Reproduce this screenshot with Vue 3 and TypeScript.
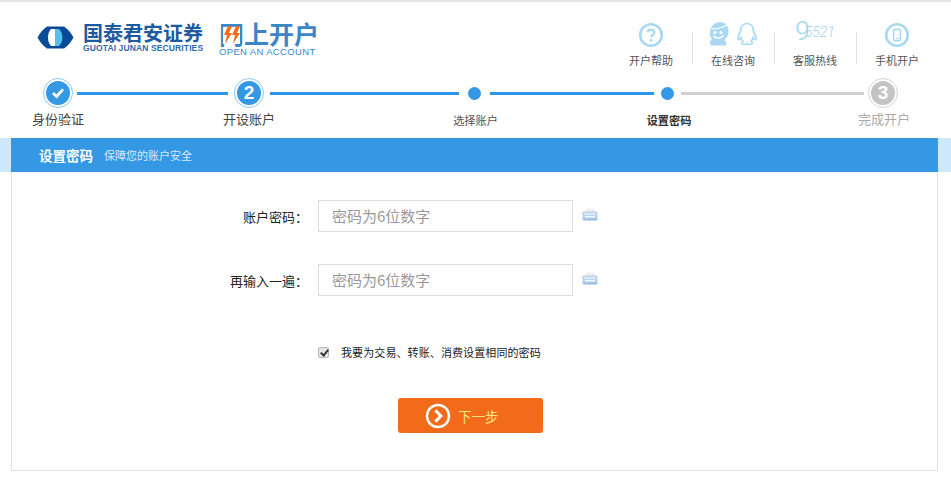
<script setup lang="ts">
import { ref } from "vue";

interface Step {
  label: string;
  kind: "done" | "num" | "dot" | "todo";
  num?: string;
  bold?: boolean;
  width: number;
  // length of the line after this step
  line?: number;
  lineOn?: boolean;
}

const steps: Step[] = [
  { label: "身份验证", kind: "done", width: 38, line: 151, lineOn: true },
  { label: "开设账户", kind: "num", num: "2", width: 42, line: 189, lineOn: true },
  { label: "选择账户", kind: "dot", width: 31, line: 164, lineOn: true },
  { label: "设置密码", kind: "dot", bold: true, width: 27, line: 183, lineOn: false },
  { label: "完成开户", kind: "todo", num: "3", width: 38 },
];

const samePassword = ref(true);
</script>

<template>
  <div class="page">
    <header class="top">
      <div class="brand">
        <svg class="brand-mark" width="37" height="23" viewBox="0 0 37 23">
          <path d="M10 0.5H27C31 3 34 7 36.5 11.5C34 16 31 20 27 22.5H10C6 20 3 16 0.5 11.5C3 7 6 3 10 0.5Z" fill="#0b4a96" />
          <path d="M18 3H14C10 7 10 16 14 20H18Z" fill="#fff" />
          <path d="M18 3H22C26.5 7 26.5 16 22 20H18Z" fill="#55bdf0" />
        </svg>
        <div class="brand-name">
          <div class="brand-cn">国泰君安证券</div>
          <div class="brand-en">GUOTAI JUNAN SECURITIES</div>
        </div>
        <div class="open">
          <div class="open-cn">
            <span class="open-first">网<svg class="bolt" width="19" height="20" viewBox="0 0 19 20">
                <rect x="1" y="2" width="17" height="17" fill="#fff" />
                <path d="M6 1H10L7 8H10L3 19L5 10H2Z" fill="#f26b1a" />
                <path d="M14 1H18L15 8H18L11 19L13 10H10Z" fill="#f26b1a" />
              </svg></span>上开户
          </div>
          <div class="open-en">OPEN AN ACCOUNT</div>
        </div>
      </div>
      <nav class="nav">
        <div class="nav-item">
          <svg width="26" height="26" viewBox="0 0 26 26" fill="none" stroke="#a9d9f2">
            <circle cx="13" cy="13" r="10.8" stroke-width="2.6" />
            <path d="M9.6 10.4C9.8 6.8 16.4 6.8 16.4 10.6C16.4 13 13 13 13 15.4" stroke-width="2.2" />
            <circle cx="13" cy="18.4" r="1.3" fill="#a9d9f2" stroke="none" />
          </svg>
          <span>开户帮助</span>
        </div>
        <div class="nav-item">
          <div class="nav-pair">
            <svg width="21" height="24" viewBox="0 0 21 24">
              <path d="M2 9C3 3 8 0 12 0C18 0 21 5 20.5 10C20.5 14 18 16.5 16 18C18 19 19 21 18 23.5H3C1 21 1.5 19 4 17.5C2 15 1.5 12 2 9Z" fill="#a9d9f2" />
              <path d="M3 7C8 7 14 6 19 3" stroke="#fff" stroke-width="1.2" fill="none" />
              <circle cx="7" cy="10.5" r="1.6" fill="#fff" />
              <circle cx="13" cy="10.5" r="1.6" fill="#fff" />
              <path d="M5.5 14C8 17 13 17 15.5 13.5" stroke="#fff" stroke-width="1.4" fill="none" />
            </svg>
            <svg width="22" height="24" viewBox="0 0 22 24" fill="none" stroke="#a9d9f2" stroke-width="1.6">
              <path d="M11 1.5C6.5 1.5 4.5 5 4.5 9.5C3 12 1.5 15 2.2 17.6C3 18 4 17 5 15.5C5.4 17.5 6 18.6 7 19.4C5 20.4 5 22.4 8 22.5C9.4 22.5 10 22 11 21.6C12 22 12.6 22.5 14 22.5C17 22.4 17 20.4 15 19.4C16 18.6 16.6 17.5 17 15.5C18 17 19 18 19.8 17.6C20.5 15 19 12 17.5 9.5C17.5 5 15.5 1.5 11 1.5Z" />
            </svg>
          </div>
          <span>在线咨询</span>
        </div>
        <div class="nav-item">
          <div class="hotline"><b>9</b><i>5521</i></div>
          <span>客服热线</span>
        </div>
        <div class="nav-item">
          <svg width="26" height="26" viewBox="0 0 26 26" fill="none" stroke="#a9d9f2">
            <circle cx="13" cy="13" r="10.8" stroke-width="2.6" />
            <rect x="9.6" y="7.4" width="6.8" height="11.2" rx="1.4" stroke-width="1.6" />
            <path d="M12 16.4H14" stroke-width="1.2" />
          </svg>
          <span>手机开户</span>
        </div>
      </nav>
    </header>

    <section class="steps">
      <template v-for="step in steps" :key="step.label">
        <div class="step" :style="{ width: step.width + 'px' }">
          <div class="step-mark">
            <span v-if="step.kind === 'dot'" class="dot"></span>
            <span v-else class="ring" :class="{ grey: step.kind === 'todo' }">
              <span class="disc">
                <svg v-if="step.kind === 'done'" width="14" height="12" viewBox="0 0 14 12" fill="none">
                  <path d="M2 6L5.6 9.4L12 2.4" stroke="#fff" stroke-width="2.8" />
                </svg>
                <template v-else>{{ step.num }}</template>
              </span>
            </span>
          </div>
          <div
            class="step-label"
            :class="{ small: step.kind === 'dot', strong: step.bold, off: step.kind === 'todo' }"
          >
            {{ step.label }}
          </div>
        </div>
        <div
          v-if="step.line"
          class="step-line"
          :class="{ on: step.lineOn }"
          :style="{ width: step.line + 'px' }"
        ></div>
      </template>
    </section>

    <div class="band-wrap">
      <div class="band">
        <span class="band-title">设置密码</span>
        <span class="band-sub">保障您的账户安全</span>
      </div>
    </div>

    <main class="panel">
      <div class="row">
        <label class="row-label">账户密码：</label>
        <input class="field" type="password" placeholder="密码为6位数字" />
        <svg class="kbd" width="16" height="13" viewBox="0 0 16 13">
          <path d="M2.5 3.5L4 0.5H12L13.5 3.5Z" fill="#efefef" />
          <rect x="0.5" y="3.5" width="15" height="9" rx="1" fill="#b7d0ec" />
          <path d="M2 6H14" stroke="#eef5fb" stroke-width="1.2" />
          <path d="M3 8.6H13" stroke="#f6f9fc" stroke-width="1.4" />
          <path d="M1 11.6H15" stroke="#8fb3d9" stroke-width="1" />
        </svg>
      </div>
      <div class="row">
        <label class="row-label">再输入一遍：</label>
        <input class="field" type="password" placeholder="密码为6位数字" />
        <svg class="kbd" width="16" height="13" viewBox="0 0 16 13">
          <path d="M2.5 3.5L4 0.5H12L13.5 3.5Z" fill="#efefef" />
          <rect x="0.5" y="3.5" width="15" height="9" rx="1" fill="#b7d0ec" />
          <path d="M2 6H14" stroke="#eef5fb" stroke-width="1.2" />
          <path d="M3 8.6H13" stroke="#f6f9fc" stroke-width="1.4" />
          <path d="M1 11.6H15" stroke="#8fb3d9" stroke-width="1" />
        </svg>
      </div>
      <label class="same">
        <input v-model="samePassword" type="checkbox" />
        <span>我要为交易、转账、消费设置相同的密码</span>
      </label>
      <button class="next" type="button">
        <svg width="26" height="26" viewBox="0 0 26 26" fill="none" stroke="#fff">
          <circle cx="13" cy="13" r="11" stroke-width="2.4" />
          <path d="M10.4 7.4L15.8 13L10.4 18.6" stroke-width="3" />
        </svg>
        <span>下一步</span>
      </button>
    </main>
  </div>
</template>

<style scoped>
.page {
  width: 951px;
  height: 479px;
  overflow: hidden;
  display: flex;
  flex-direction: column;
  background: #fff;
  font-family: "Noto Sans CJK SC", "Liberation Sans", sans-serif;
  color: #333;
}

/* Header */
.top {
  height: 58px;
  flex: none;
  border-top: 2px solid #e8e8e8;
  padding: 18px 13px 0 37px;
  display: flex;
  justify-content: space-between;
  align-items: flex-start;
}

.brand {
  display: flex;
  align-items: flex-start;
}

.brand-mark {
  margin-top: 6px;
}

.brand-name {
  margin-left: 9px;
  margin-top: 4px;
  width: 121px;
}

.brand-cn {
  font-size: 20px;
  line-height: 18px;
  font-weight: 700;
  color: #1d5a9e;
  white-space: nowrap;
}

.brand-en {
  font-family: "Liberation Sans", sans-serif;
  font-size: 8.5px;
  line-height: 8px;
  margin-top: 2px;
  letter-spacing: 0.12px;
  font-weight: 700;
  color: #2f6cab;
  white-space: nowrap;
}

.open {
  margin-left: 15px;
  margin-top: 1px;
}

.open-cn {
  font-size: 25px;
  line-height: 25px;
  font-weight: 700;
  color: #3a86c8;
  white-space: nowrap;
}

.open-first {
  position: relative;
  display: inline-block;
}

.bolt {
  position: absolute;
  left: 3px;
  top: 4px;
}

.open-en {
  font-family: "Liberation Sans", sans-serif;
  font-size: 9.5px;
  line-height: 9px;
  margin-top: 1px;
  letter-spacing: 0.35px;
  color: #3a86c8;
  white-space: nowrap;
}

.nav {
  display: flex;
  margin-top: 2px;
}

.nav-item {
  width: 82px;
  height: 44px;
  display: flex;
  flex-direction: column;
  align-items: center;
  font-size: 11px;
  color: #555;
  position: relative;
}

.nav-item > svg,
.nav-pair,
.hotline {
  height: 26px;
  flex: none;
}

.nav-item > span {
  margin-top: 4px;
  line-height: 16px;
  white-space: nowrap;
}

.nav-item + .nav-item::before {
  content: "";
  position: absolute;
  left: 0;
  top: 10px;
  height: 32px;
  border-left: 1px solid #e2e2e2;
}

.nav-pair {
  display: flex;
  gap: 7px;
}

.hotline {
  display: flex;
  align-items: flex-start;
  font-family: Roboto, "Liberation Sans", sans-serif;
  color: #a0d4f0;
  line-height: 1;
}

.hotline b {
  font-size: 26px;
  font-weight: 300;
  margin-top: -4px;
}

.hotline i {
  font-size: 14px;
  font-weight: 300;
  margin-left: -5px;
  margin-top: 3px;
}

/* Steps */
.steps {
  height: 60px;
  flex: none;
  padding-left: 39px;
  display: flex;
  align-items: flex-start;
}

.step {
  flex: none;
  display: flex;
  flex-direction: column;
  align-items: center;
}

.step-mark {
  height: 30px;
  display: flex;
  align-items: center;
  justify-content: center;
}

.ring {
  width: 30px;
  height: 30px;
  box-sizing: border-box;
  border: 1px solid #8ec8f0;
  border-radius: 50%;
  display: flex;
  align-items: center;
  justify-content: center;
  flex: none;
}

.disc {
  width: 24px;
  height: 24px;
  border-radius: 50%;
  background: #3498e5;
  color: #fff;
  display: flex;
  align-items: center;
  justify-content: center;
  font-family: "Liberation Sans", sans-serif;
  font-size: 19px;
  font-weight: 700;
}

.ring.grey {
  border-color: #d4d4d4;
}

.ring.grey .disc {
  background: #c4c4c4;
}

.dot {
  width: 13px;
  height: 13px;
  border-radius: 50%;
  background: #3498e5;
}

.step-label {
  margin-top: 3px;
  font-size: 13px;
  line-height: 16px;
  color: #444;
  white-space: nowrap;
}

.step-label.small {
  font-size: 11.2px;
  color: #555;
  margin-top: 4px;
  margin-left: 2px;
}

.step-label.strong {
  font-weight: 700;
  color: #333;
  margin-left: 3px;
}

.step-label.off {
  color: #aaa;
  margin-left: 2px;
}

.step-line {
  flex: none;
  height: 3px;
  margin-top: 14px;
  background: #d0d0d0;
}

.step-line.on {
  background: #2e96e8;
}

/* Band */
.band-wrap {
  flex: none;
  padding: 0 13px 0 11px;
  background: #cde8fa;
}

.band {
  height: 34px;
  background: #3498e5;
  padding-left: 28px;
  display: flex;
  align-items: center;
  color: #fff;
}

.band-title {
  font-size: 13.5px;
  font-weight: 700;
}

.band-sub {
  margin-left: 11px;
  font-size: 11px;
  color: #d8ecfb;
}

/* Form panel */
.panel {
  flex: none;
  height: 299px;
  box-sizing: border-box;
  margin: 0 13px 0 11px;
  border: 1px solid #e2e2e2;
  border-top: 0;
  padding-top: 28px;
  display: flex;
  flex-direction: column;
  align-items: flex-start;
}

.row {
  height: 32px;
  margin-bottom: 32px;
  display: flex;
  align-items: center;
}

.row-label {
  width: 296px;
  margin-right: 10px;
  text-align: right;
  font-size: 13px;
  color: #222;
}

.field {
  width: 255px;
  height: 32px;
  box-sizing: border-box;
  border: 1px solid #dcdcdc;
  padding: 0 13px 2px;
  outline: none;
  font-family: inherit;
  font-size: 15px;
}

.field::placeholder {
  color: #999;
}

.kbd {
  margin-left: 9px;
  margin-top: -3px;
}

.same {
  height: 22px;
  margin-top: 13px;
  margin-left: 306px;
  display: flex;
  align-items: center;
  font-size: 11px;
  letter-spacing: 0.1px;
  color: #222;
}

.same input {
  appearance: none;
  position: relative;
  box-sizing: border-box;
  width: 11px;
  height: 11px;
  margin: 0 12px 0 0;
  border: 1px solid #b5b5b5;
  border-radius: 2px;
  background: #e6e6e6;
}

.same input:checked::before {
  content: "";
  position: absolute;
  left: 3px;
  top: 0;
  width: 3px;
  height: 6px;
  border: solid #333;
  border-width: 0 2px 2px 0;
  transform: rotate(40deg);
}

.next {
  width: 145px;
  height: 35px;
  margin-top: 35px;
  margin-left: 386px;
  padding: 0 0 0 27px;
  border: 0;
  border-radius: 3px;
  background: #f26b1a;
  color: #ffe680;
  font-family: inherit;
  font-size: 13.5px;
  display: flex;
  align-items: center;
  gap: 7px;
}
</style>

<style>
html,
body {
  margin: 0;
  background: #fff;
}
</style>
